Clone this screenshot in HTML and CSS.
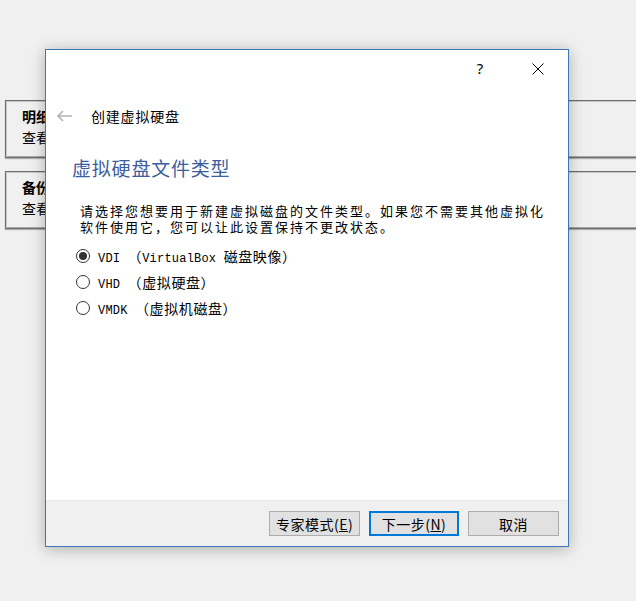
FILE: index.html
```html
<!DOCTYPE html>
<html lang="zh-CN">
<head>
<meta charset="utf-8">
<title>创建虚拟硬盘</title>
<link rel="stylesheet" href="styles.css">
</head>
<body>
<div class="desk">
  <div class="panel">
    <div class="panel-title">明细信息</div>
    <div class="panel-sub">查看虚拟机明细</div>
  </div>
  <div class="panel">
    <div class="panel-title">备份</div>
    <div class="panel-sub">查看备份状态</div>
  </div>
</div>

<div class="dialog">
  <div class="titlebar">
    <span class="cap-btn help">?</span>
    <span class="cap-btn">
      <svg width="12" height="12" viewBox="0 0 12 12"><path d="M0.5 0.5 L11.5 11.5 M11.5 0.5 L0.5 11.5" stroke="#000" stroke-width="1" fill="none"/></svg>
    </span>
  </div>
  <div class="content">
    <div class="nav">
      <svg class="back" width="16" height="12" viewBox="0 0 16 12"><path d="M1 6 H15 M6 1 L1 6 L6 11" stroke="#b4b4b4" stroke-width="1.6" fill="none"/></svg>
      <span class="nav-title">创建虚拟硬盘</span>
    </div>
    <h1 class="heading">虚拟硬盘文件类型</h1>
    <p class="desc">请选择您想要用于新建虚拟磁盘的文件类型。如果您不需要其他虚拟化<br>软件使用它，您可以让此设置保持不更改状态。</p>
    <div class="options">
      <div class="opt"><span class="radio checked"></span><span class="lbl">VDI <span class="zh">（</span>VirtualBox <span class="zh">磁盘映像）</span></span></div>
      <div class="opt"><span class="radio"></span><span class="lbl">VHD <span class="zh">（虚拟硬盘）</span></span></div>
      <div class="opt"><span class="radio"></span><span class="lbl">VMDK <span class="zh">（虚拟机磁盘）</span></span></div>
    </div>
  </div>
  <div class="footer">
    <span class="btn">专家模式(<u>E</u>)</span>
    <span class="btn default">下一步(<u>N</u>)</span>
    <span class="btn">取消</span>
  </div>
</div>
</body>
</html>
```
FILE: styles.css
```css
html, body {
  margin: 0;
  padding: 0;
  background: #f0f0f0;
  overflow: hidden;
  width: 636px;
  height: 601px;
  font-family: "Noto Sans CJK SC", sans-serif;
}

.desk {
  padding: 100px 0 0 5px;
  display: flex;
  flex-direction: column;
  gap: 13px;
}

.panel {
  width: 631px;
  height: 58px;
  box-sizing: border-box;
  border: 1px solid #6e6e6e;
  border-right: none;
  box-shadow: inset 1px 1px 0 #c8c8c8, inset 0 -1px 0 #a8a8a8, 0 1px 1px #b0b0b0;
  background: #f0f0f0;
  padding: 5px 0 0 16px;
  font-size: 14px;
  line-height: 21px;
  color: #000;
  overflow: hidden;
}

.panel-title {
  font-weight: bold;
}

.dialog {
  position: absolute;
  left: 45px;
  top: 49px;
  width: 524px;
  height: 498px;
  box-sizing: border-box;
  border: 1px solid #3a78b8;
  background: #fff;
  box-shadow: 0 2px 14px rgba(0, 0, 0, 0.28);
  display: flex;
  flex-direction: column;
}

.titlebar {
  height: 38px;
  display: flex;
  justify-content: flex-end;
  align-items: center;
  padding-right: 1px;
  flex: none;
}

.cap-btn {
  width: 58px;
  height: 38px;
  display: flex;
  align-items: center;
  justify-content: center;
  font-family: "Noto Sans", sans-serif;
  font-size: 15px;
  color: #000;
}

.cap-btn.help {
  padding-bottom: 2px;
  box-sizing: border-box;
}

.content {
  flex: 1;
  padding: 0;
}

.nav {
  margin-top: 16px;
  height: 24px;
  display: flex;
  align-items: center;
  padding-left: 11px;
}

.back {
  margin-right: 18px;
}

.nav-title {
  font-size: 14px;
  letter-spacing: 0.8px;
  color: #000;
}

.heading {
  margin: 26px 0 0 26px;
  font-size: 19px;
  line-height: 28px;
  font-weight: normal;
  color: #3d5e9e;
  letter-spacing: 0.8px;
}

.desc {
  margin: 21px 0 0 34px;
  font-size: 13px;
  line-height: 16px;
  letter-spacing: 2px;
  color: #000;
}

.options {
  margin: 8px 0 0 30px;
  display: flex;
  flex-direction: column;
}

.opt {
  height: 26px;
  display: flex;
  align-items: center;
}

.radio {
  width: 14px;
  height: 14px;
  box-sizing: border-box;
  border: 1px solid #333;
  border-radius: 50%;
  background: #fff;
  margin-right: 8px;
  display: flex;
  align-items: center;
  justify-content: center;
}

.radio.checked::after {
  content: "";
  width: 8px;
  height: 8px;
  border-radius: 50%;
  background: #333;
}

.lbl {
  font-family: "Liberation Mono", monospace;
  font-size: 12px;
  letter-spacing: 0.2px;
  color: #000;
  white-space: pre;
}

.lbl .zh {
  font-family: "Noto Sans CJK SC", sans-serif;
  font-size: 14px;
  letter-spacing: 0.6px;
}

.footer {
  height: 46px;
  flex: none;
  box-sizing: border-box;
  background: #f0f0f0;
  border-top: 1px solid #e6e6e6;
  display: flex;
  justify-content: flex-end;
  gap: 9px;
  padding: 10px 9px 0 0;
}

.btn {
  width: 91px;
  height: 25px;
  box-sizing: border-box;
  border: 1px solid #adadad;
  background: #e1e1e1;
  display: flex;
  align-items: center;
  justify-content: center;
  font-size: 14px;
  color: #000;
  letter-spacing: 0.5px;
}

.btn u {
  text-decoration: underline;
}

.btn.default {
  width: 90px;
  border: 2px solid #0078d7;
}
```
